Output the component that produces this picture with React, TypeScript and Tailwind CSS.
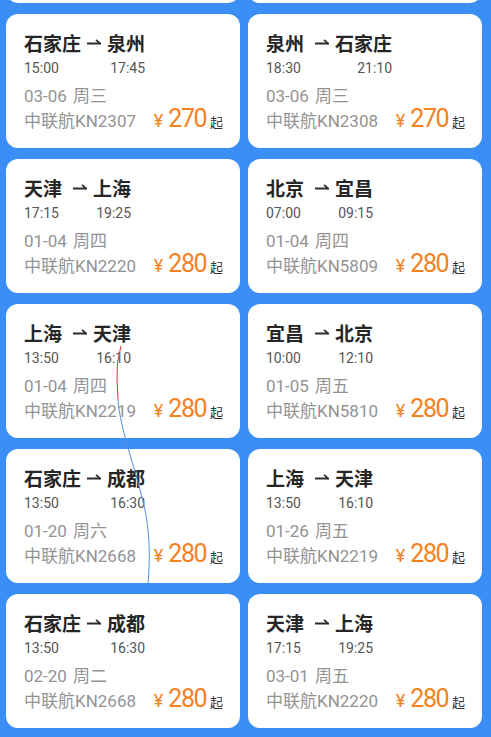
import React from 'react';

interface Flight {
  from: string;
  to: string;
  dep: string;
  arr: string;
  day: string;
  week: string;
  no: string;
  price: number;
}

const rows: Flight[][] = [
  [
    { from: '石家庄', to: '泉州', dep: '15:00', arr: '17:45', day: '03-06', week: '周三', no: '中联航KN2307', price: 270 },
    { from: '泉州', to: '石家庄', dep: '18:30', arr: '21:10', day: '03-06', week: '周三', no: '中联航KN2308', price: 270 },
  ],
  [
    { from: '天津', to: '上海', dep: '17:15', arr: '19:25', day: '01-04', week: '周四', no: '中联航KN2220', price: 280 },
    { from: '北京', to: '宜昌', dep: '07:00', arr: '09:15', day: '01-04', week: '周四', no: '中联航KN5809', price: 280 },
  ],
  [
    { from: '上海', to: '天津', dep: '13:50', arr: '16:10', day: '01-04', week: '周四', no: '中联航KN2219', price: 280 },
    { from: '宜昌', to: '北京', dep: '10:00', arr: '12:10', day: '01-05', week: '周五', no: '中联航KN5810', price: 280 },
  ],
  [
    { from: '石家庄', to: '成都', dep: '13:50', arr: '16:30', day: '01-20', week: '周六', no: '中联航KN2668', price: 280 },
    { from: '上海', to: '天津', dep: '13:50', arr: '16:10', day: '01-26', week: '周五', no: '中联航KN2219', price: 280 },
  ],
  [
    { from: '石家庄', to: '成都', dep: '13:50', arr: '16:30', day: '02-20', week: '周二', no: '中联航KN2668', price: 280 },
    { from: '天津', to: '上海', dep: '17:15', arr: '19:25', day: '03-01', week: '周五', no: '中联航KN2220', price: 280 },
  ],
];

const Arrow = () => (
  <svg width="14" height="6" viewBox="0 0 14 6" className="mt-[6px] ml-[6px] mr-[6px] shrink-0">
    <path d="M0 4.5 H13.5" stroke="#2b2b2b" strokeWidth="2" />
    <path d="M13.2 4.6 L9.6 1.4" stroke="#2b2b2b" strokeWidth="1.8" strokeLinecap="round" />
  </svg>
);

const FlightCard: React.FC<{ f: Flight }> = ({ f }) => (
  <div className="bg-white rounded-[12px] h-[134px] pl-[18px] pr-[17px] pt-[19px] flex flex-col">
    <div className="flex items-start">
      <div className={f.from.length === 2 ? 'flex flex-col pr-[5px]' : 'flex flex-col'}>
        <span className="text-[19px] leading-[24px] font-bold text-[#262626]">{f.from}</span>
        <span className="text-[14px] leading-[18px] mt-[2px] text-[#555]">{f.dep}</span>
      </div>
      <Arrow />
      <div className="flex flex-col items-end">
        <span className="text-[19px] leading-[24px] font-bold text-[#262626]">{f.to}</span>
        <span className="text-[14px] leading-[18px] mt-[2px] text-[#555]">{f.arr}</span>
      </div>
    </div>
    <div className="mt-[8px] flex text-[17px] leading-[22px] text-[#939393]">
      <span>{f.day}</span>
      <span className="ml-[6px]">{f.week}</span>
    </div>
    <div className="flex items-baseline justify-between leading-[23px]">
      <span className="text-[17px] text-[#939393]">{f.no}</span>
      <span className="flex items-baseline">
        <span className="text-[18px] text-[#f5811f]">¥</span>
        <span className="text-[25px] leading-[23px] ml-[5px] tracking-[-1.5px] text-[#f5811f]">{f.price}</span>
        <span className="text-[13px] ml-[4px] text-[#333]">起</span>
      </span>
    </div>
  </div>
);

export default function App() {
  return (
    <div
      className="relative h-[737px] overflow-hidden bg-[#3b8ef5]"
      style={{ fontFamily: 'Roboto, "Noto Sans CJK SC", sans-serif' }}
    >
      <div className="mt-[-131px] pl-[6px] pr-[9px] grid grid-cols-2 gap-x-[8px] gap-y-[11px]">
        {/* previous row, scrolled almost out of view */}
        <div className="bg-white rounded-[12px] h-[134px]" />
        <div className="bg-white rounded-[12px] h-[134px]" />
        {rows.map((r, i) => (
          <React.Fragment key={i}>
            <FlightCard f={r[0]} />
            <FlightCard f={r[1]} />
          </React.Fragment>
        ))}
      </div>
      <svg className="absolute left-0 top-0 pointer-events-none" width="491" height="737">
        <path d="M121 346 Q116 362 117 380 L118 400" stroke="#d9363e" strokeWidth="1" fill="none" />
        <path d="M118 400 C120 430 138 475 146 515 C150 540 150 560 148 584" stroke="#5a8de0" strokeWidth="1" fill="none" />
      </svg>
    </div>
  );
}
